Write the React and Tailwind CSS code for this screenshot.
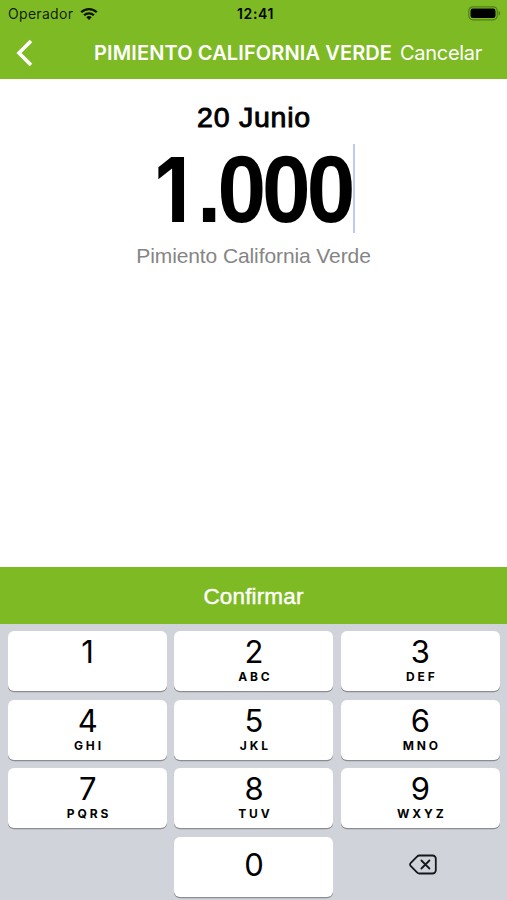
import React from "react";

const keys = [
  ["1", ""],
  ["2", "ABC"],
  ["3", "DEF"],
  ["4", "GHI"],
  ["5", "JKL"],
  ["6", "MNO"],
  ["7", "PQRS"],
  ["8", "TUV"],
  ["9", "WXYZ"],
];

function Key({ digit, letters }) {
  return (
    <button className="flex h-[60px] flex-col items-center rounded-[6px] bg-white text-black shadow-[0_1.3px_0_#8b8d92]">
      <span className={`text-[31px] leading-[36px] font-normal tracking-[-0.3px] ${digit === "0" ? "mt-[10.5px]" : "mt-[3.4px]"}`}>{digit}</span>
      {letters && (
        <span className="-mt-px pl-[3px] text-[12px] leading-[15px] font-bold tracking-[2.9px]">{letters}</span>
      )}
    </button>
  );
}

function StatusBar() {
  return (
    <div className="flex h-[27px] items-center justify-between pr-[6px] pl-[8px] text-black/85">
      <div className="flex w-[150px] items-center gap-[7px]">
        <span className="text-[14px] leading-[20px] tracking-[0.3px]">Operador</span>
        <svg width="18" height="14" viewBox="0 0 18 14" fill="none" stroke="#0b1400" strokeWidth="2.3">
          <path d="M1.2 5.3a11 11 0 0 1 15.6 0" />
          <path d="M4.1 8.3a7 7 0 0 1 9.8 0" />
          <path d="M9 13l-2.7-2.8a3.9 3.9 0 0 1 5.4 0z" fill="#0b1400" stroke="none" />
        </svg>
      </div>
      <span className="pl-[2px] text-[14px] leading-[20px] font-semibold tracking-[0.6px] text-black">12:41</span>
      <div className="flex w-[150px] justify-end">
        <svg width="33" height="15" viewBox="0 0 33 15">
          <rect x="0.8" y="0.8" width="28.4" height="13" rx="4" fill="none" stroke="#527f17" strokeWidth="1.2" />
          <rect x="2.5" y="2.6" width="25" height="9.4" rx="2.3" fill="#000" />
          <path d="M30.7 5v4.6c1.5-.4 1.5-4.2 0-4.6z" fill="#426512" />
        </svg>
      </div>
    </div>
  );
}

export default function App() {
  return (
    <div className="flex h-[900px] w-[507px] flex-col overflow-hidden bg-white font-['Inter',sans-serif]">
      <header className="h-[79px] bg-[#7eba24]">
        <StatusBar />
        <div className="flex h-[51px] items-center whitespace-nowrap text-white">
          <svg className="ml-[15px]" width="19" height="28" viewBox="0 0 19 28" fill="none" stroke="#fff" strokeWidth="3.6">
            <path d="M16 2L4 14l12 12" />
          </svg>
          <h1 className="ml-[60px] w-[298px] text-[20px] font-semibold tracking-[0.12px]">PIMIENTO CALIFORNIA VERDE</h1>
          <button className="ml-[8px] text-[20px] tracking-[-0.3px]">Cancelar</button>
        </div>
      </header>

      <main className="flex h-[488px] flex-col items-center font-['Liberation_Sans',Arial,sans-serif]">
        <h2 className="mt-[20px] pl-px text-[28.5px] leading-[36px] tracking-[0.75px] text-black [-webkit-text-stroke:0.9px_#000]">20 Junio</h2>
        <div className="mt-[8px] flex h-[90px] w-[203px] items-center justify-end leading-[90px] font-bold text-black">
          <span className="mt-[3px] mr-[3px] w-[42px] origin-left scale-x-[0.89] text-center font-['Inter',sans-serif] text-[90px] tracking-[-3px]">1</span>
          <span className="mt-[4px] block w-[156px] shrink-0 origin-left scale-x-[0.93] text-[94px] tracking-[-4.2px]">.000</span>
          <span className="h-[89px] w-[2px] shrink-0 bg-[#bccaf5]" />
        </div>
        <p className="mt-[10px] text-[21px] leading-[26px] tracking-[-0.1px] text-[#858585]">Pimiento California Verde</p>
      </main>

      <button className="h-[57px] shrink-0 bg-[#7eba24] pt-[2px] font-['Liberation_Sans',Arial,sans-serif] text-[22.5px] tracking-[0.15px] text-white [-webkit-text-stroke:0.4px_#fff]">
        Confirmar
      </button>

      <section className="grid h-[276px] grid-cols-[159px_159px_159px] content-start gap-x-[7.4px] gap-y-[8.5px] bg-[#d1d3da] pt-[7px] pl-[8px]">
        {keys.map(([digit, letters]) => (
          <Key key={digit} digit={digit} letters={letters} />
        ))}
        <span />
        <Key digit="0" />
        <button className="flex h-[60px] items-center justify-center" aria-label="Borrar">
          <svg className="mt-[-3px] mr-[-6px]" width="30" height="22" viewBox="0 0 30 22" fill="none" stroke="#15171a" strokeWidth="1.8" strokeLinecap="round" strokeLinejoin="round">
            <path d="M11.5 1.5h13a3.3 3.3 0 0 1 3.3 3.3v11.4a3.3 3.3 0 0 1-3.3 3.3h-13c-1 0-1.8-.4-2.5-1.1l-6.4-6.6a1.8 1.8 0 0 1 0-2.6L9 2.6c.7-.7 1.5-1.1 2.5-1.1z" />
            <path d="M13.4 6.5l8 8M21.4 6.5l-8 8" />
          </svg>
        </button>
      </section>
    </div>
  );
}
